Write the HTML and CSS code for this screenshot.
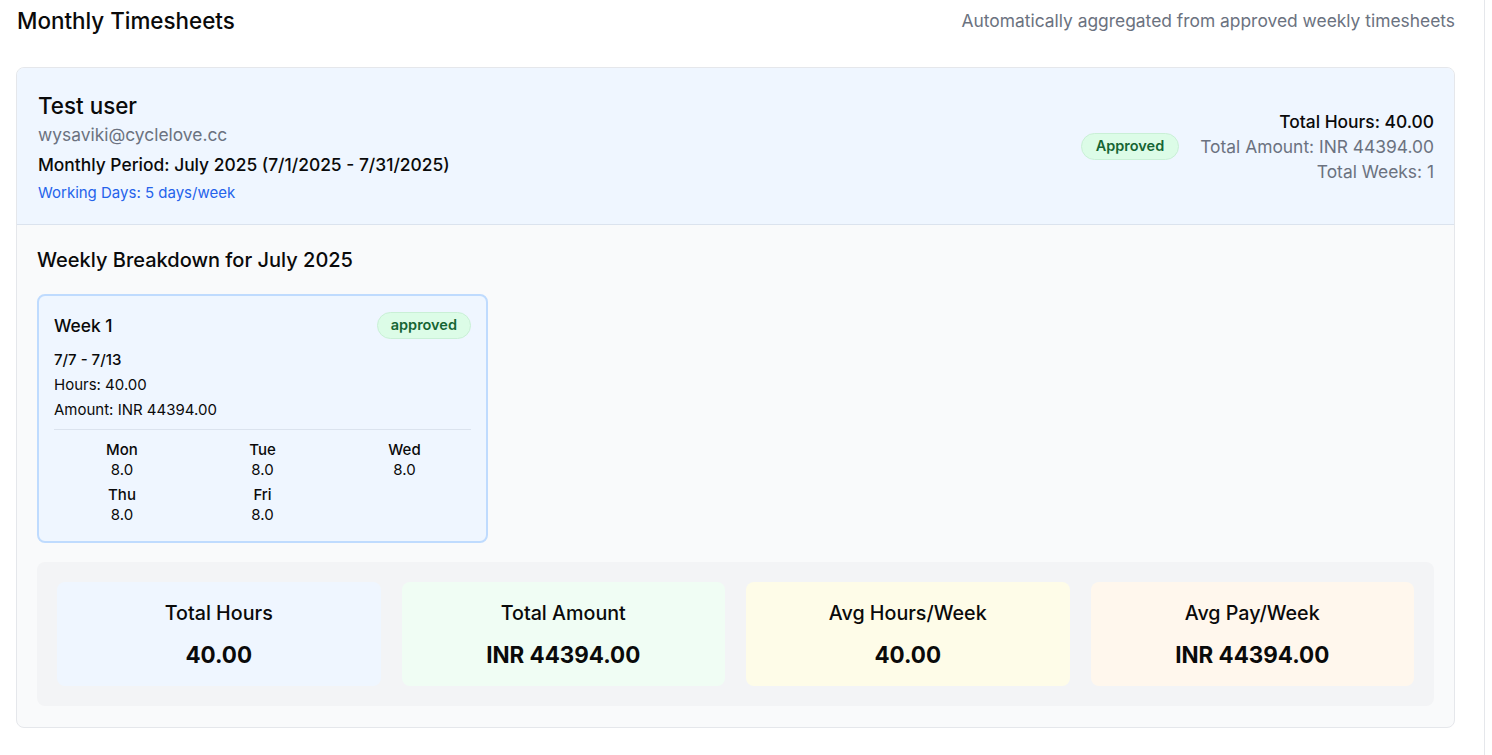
FILE: index.html
```html
<!DOCTYPE html>
<html>
<head>
<meta charset="utf-8">
<link rel="stylesheet" href="styles.css">
</head>
<body>
<div class="page">
  <div class="top">
    <h1 class="title">Monthly Timesheets</h1>
    <div class="subtitle">Automatically aggregated from approved weekly timesheets</div>
  </div>
  <div class="card">
    <div class="card-head">
      <div class="user">
        <div class="name">Test user</div>
        <div class="email">wysaviki@cyclelove.cc</div>
        <div class="period">Monthly Period: July 2025 (7/1/2025 - 7/31/2025)</div>
        <div class="workdays">Working Days: 5 days/week</div>
      </div>
      <div class="head-right">
        <span class="badge">Approved</span>
        <div class="totals">
          <div class="t-hours">Total Hours: 40.00</div>
          <div class="t-muted">Total Amount: INR 44394.00</div>
          <div class="t-muted">Total Weeks: 1</div>
        </div>
      </div>
    </div>
    <div class="card-body">
      <h2 class="section-title">Weekly Breakdown for July 2025</h2>
      <div class="weeks">
        <div class="week">
          <div class="week-top">
            <span class="week-name">Week 1</span>
            <span class="badge small">approved</span>
          </div>
          <div class="week-range">7/7 - 7/13</div>
          <div class="week-line">Hours: 40.00</div>
          <div class="week-line">Amount: INR 44394.00</div>
          <div class="days">
            <div class="day"><div class="d-name">Mon</div><div class="d-val">8.0</div></div>
            <div class="day"><div class="d-name">Tue</div><div class="d-val">8.0</div></div>
            <div class="day"><div class="d-name">Wed</div><div class="d-val">8.0</div></div>
            <div class="day"><div class="d-name">Thu</div><div class="d-val">8.0</div></div>
            <div class="day"><div class="d-name">Fri</div><div class="d-val">8.0</div></div>
          </div>
        </div>
      </div>
      <div class="summary">
        <div class="stat blue"><div class="s-label">Total Hours</div><div class="s-val">40.00</div></div>
        <div class="stat green"><div class="s-label">Total Amount</div><div class="s-val">INR 44394.00</div></div>
        <div class="stat yellow"><div class="s-label">Avg Hours/Week</div><div class="s-val">40.00</div></div>
        <div class="stat orange"><div class="s-label">Avg Pay/Week</div><div class="s-val">INR 44394.00</div></div>
      </div>
    </div>
  </div>
</div>
</body>
</html>
```

FILE: styles.css
```css
* { box-sizing: border-box; }
html, body { margin: 0; padding: 0; background: #fff; }
body {
  font-family: Inter, "Noto Sans", sans-serif;
  color: #0a0a0a;
}
.page {
  width: 1485px;
  min-height: 755px;
  border-right: 1px solid #e5e7eb;
  padding: 0 29px 0 16px;
}
.top {
  display: flex;
  justify-content: space-between;
  align-items: center;
  height: 40px;
  padding-top: 1px;
}
.title {
  margin: 0 0 0 1px;
  font-size: 22.4px;
  font-weight: 500;
}
.subtitle {
  font-size: 17.4px;
  color: #6b7280;
}
.card {
  margin-top: 27px;
  border: 1px solid #e5e7eb;
  border-radius: 8px;
  overflow: hidden;
  background: #f9fafb;
}
.card-head {
  background: #eff6ff;
  border-bottom: 1px solid #dbe3ee;
  padding: 24px 20px 18px 21px;
  display: flex;
  justify-content: space-between;
  align-items: center;
}
.name { font-size: 22.4px; font-weight: 500; line-height: 28px; }
.email { font-size: 17.4px; color: #6b7280; line-height: 30px; }
.period { font-size: 17.4px; font-weight: 500; line-height: 30px; }
.workdays { font-size: 15px; color: #2563eb; line-height: 26px; }
.head-right { display: flex; align-items: center; gap: 21px; margin-bottom: 5px; }
.badge {
  display: inline-block;
  background: #dcfce7;
  color: #166534;
  border: 1px solid #c9f0d6;
  border-radius: 999px;
  font-size: 14.5px;
  font-weight: 600;
  padding: 4px 14px 5px;
  line-height: 16px;
}
.totals { text-align: right; }
.t-hours { font-size: 17.4px; font-weight: 500; line-height: 25px; }
.t-muted { font-size: 17.4px; color: #6b7280; line-height: 25px; }
.card-body { padding: 22px 20px 21px 20px; }
.section-title {
  margin: 0;
  font-size: 20px;
  font-weight: 500;
  line-height: 26px;
}
.weeks {
  margin-top: 21px;
  display: grid;
  grid-template-columns: repeat(3, 1fr);
  gap: 22px;
}
.week {
  background: #eff6ff;
  border: 2px solid #bfdbfe;
  border-radius: 8px;
  padding: 15px 15px 16px;
}
.week-top {
  display: flex;
  justify-content: space-between;
  align-items: center;
  height: 28px;
}
.week-name { font-size: 17.4px; font-weight: 500; }
.badge.small { padding: 4px 13px 5px; }
.week-range { margin-top: 9px; font-size: 15px; font-weight: 500; line-height: 24px; }
.week-line { font-size: 15px; line-height: 25px; }
.days {
  margin-top: 7px;
  border-top: 1px solid #dbe3ee;
  padding-top: 10px;
  display: grid;
  grid-template-columns: repeat(3, 1fr);
  row-gap: 5px;
  text-align: center;
  font-size: 15px;
}
.day:nth-child(3n+1) { margin-left: -3px; }
.day:nth-child(3n) { margin-right: -6px; }
.d-name { font-weight: 500; line-height: 20px; }
.d-val { line-height: 20px; }
.summary {
  margin-top: 19px;
  background: #f3f4f6;
  border-radius: 8px;
  padding: 20px;
  display: grid;
  grid-template-columns: repeat(4, 1fr);
  gap: 21px;
}
.stat {
  border-radius: 8px;
  height: 104px;
  text-align: center;
  padding-top: 18px;
}
.s-label { font-size: 19.7px; font-weight: 500; line-height: 26px; }
.s-val { margin-top: 15px; font-size: 22.4px; font-weight: 700; line-height: 28px; }
.blue { background: #eff6ff; }
.green { background: #f0fdf4; }
.yellow { background: #fefce8; }
.orange { background: #fff7ed; }
```
